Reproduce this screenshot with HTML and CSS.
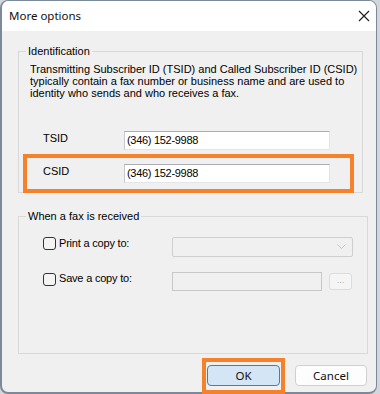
FILE: index.html
```html
<!DOCTYPE html>
<html>
<head>
<meta charset="utf-8">
<link rel="stylesheet" href="styles.css">
</head>
<body>
<div class="window">
  <div class="titlebar">
    <span class="title">More options</span>
    <svg class="close" width="12" height="12" viewBox="0 0 12 12"><path d="M1 1 L11 11 M11 1 L1 11" stroke="#1b1b1b" stroke-width="1.1" fill="none"/></svg>
  </div>
  <div class="content">
    <fieldset class="group group-id">
      <legend>Identification</legend>
      <p class="desc">Transmitting Subscriber ID (TSID) and Called Subscriber ID (CSID) typically contain a fax number or business name and are used to identity who sends and who receives a fax.</p>
      <div class="row row-tsid">
        <label class="lbl">TSID</label>
        <div class="textbox">(346) 152-9988</div>
      </div>
      <div class="row row-csid">
        <label class="lbl">CSID</label>
        <div class="textbox">(346) 152-9988</div>
        <div class="highlight hl-csid"></div>
      </div>
    </fieldset>
    <fieldset class="group group-fax">
      <legend>When a fax is received</legend>
      <div class="crow crow-print">
        <span class="check"></span>
        <span class="clabel">Print a copy to:</span>
        <div class="combo disabled">
          <svg class="chev" width="9" height="6" viewBox="0 0 9 6"><path d="M0.5 0.5 L4.5 4.5 L8.5 0.5" stroke="#c4c4c4" stroke-width="1" fill="none"/></svg>
        </div>
      </div>
      <div class="crow crow-save">
        <span class="check"></span>
        <span class="clabel">Save a copy to:</span>
        <div class="pathbox disabled"></div>
        <div class="browse">...</div>
      </div>
    </fieldset>
    <div class="buttons">
      <div class="ok-wrap">
        <button class="btn btn-ok">OK</button>
        <div class="highlight hl-ok"></div>
      </div>
      <button class="btn btn-cancel">Cancel</button>
    </div>
  </div>
</div>
</body>
</html>
```
FILE: styles.css
```css
html, body {
  margin: 0;
  padding: 0;
}
body {
  background: #d3d6da;
  width: 380px;
  height: 394px;
  overflow: hidden;
  font-family: "Liberation Sans", Arial, sans-serif;
  font-size: 11px;
  color: #000;
}
.window {
  position: relative;
  box-sizing: border-box;
  width: 377px;
  height: 394px;
  background: #f0f0f0;
  border: 1px solid #7b8a99;
  border-left-width: 2px;
  border-bottom-width: 2px;
  border-radius: 8px;
}
.titlebar {
  height: 30px;
  background: #fff;
  border-radius: 7px 7px 0 0;
  display: flex;
  align-items: center;
  justify-content: space-between;
  padding: 0 6px 0 7px;
}
.title {
  font-family: "Noto Sans", "Open Sans", sans-serif;
  font-size: 11.5px;
  color: #111;
  margin-top: -1px;
}
.content {
  padding: 13px 0 0 16px;
}
.group {
  margin: 0;
  border: 1px solid #d9d9d9;
  border-radius: 0;
  box-sizing: border-box;
  padding: 0 0 0 7px;
}
.group legend {
  padding: 0 2px;
  line-height: 14px;
  height: 14px;
}
.group-id {
  width: 345px;
  padding-bottom: 9px;
}
.desc {
  margin: 5px 0 0 4px;
  line-height: 12px;
  width: 330px;
  letter-spacing: 0px;
}
.row {
  display: flex;
  align-items: flex-start;
  margin-left: 17px;
  width: 287px;
}
.row-tsid {
  margin-top: 32px;
}
.row-csid {
  position: relative;
  margin-top: 14px;
}
.lbl {
  width: 81px;
  line-height: 12px;
  margin-top: 1px;
}
.textbox {
  box-sizing: border-box;
  width: 206px;
  height: 19px;
  background: #fff;
  border: 1px solid #e3e5ea;
  border-top-color: #abadb3;
  border-left-color: #c6c8cd;
  padding: 0 0 0 2px;
  line-height: 17px;
  letter-spacing: -0.3px;
}
.highlight {
  position: absolute;
  box-sizing: border-box;
  border: 4px solid #f5822a;
}
.hl-csid {
  left: -20px;
  top: -10px;
  right: -24px;
  bottom: -10px;
}
.group-fax {
  width: 350px;
  margin-top: 16px;
  padding-bottom: 62px;
}
.crow {
  display: flex;
  align-items: flex-start;
  margin-left: 17px;
}
.crow-print {
  margin-top: 14px;
}
.crow-save {
  margin-top: 15px;
}
.check {
  box-sizing: border-box;
  width: 13px;
  height: 13px;
  border: 1px solid #333;
  border-radius: 3px;
  background: #f4f4f4;
  flex: none;
}
.crow-save .check {
  margin-top: 1px;
}
.clabel {
  margin-left: 3px;
  width: 113px;
  line-height: 13px;
  letter-spacing: -0.2px;
}
.combo {
  position: relative;
  box-sizing: border-box;
  width: 181px;
  height: 20px;
  border: 1px solid #cfcfcf;
  border-radius: 2px;
  background: #f0f0f0;
  display: flex;
  align-items: center;
  justify-content: flex-end;
  padding-right: 6px;
}
.pathbox {
  box-sizing: border-box;
  width: 150px;
  height: 19px;
  border: 1px solid #c8c8c8;
  background: #f0f0f0;
}
.browse {
  box-sizing: border-box;
  width: 23px;
  height: 17px;
  margin: 1px 0 0 7px;
  border: 1px solid #dcdcdc;
  border-radius: 3px;
  background: #f5f5f5;
  color: #a8a8a8;
  font-size: 9px;
  line-height: 13px;
  text-align: center;
}
.buttons {
  display: flex;
  justify-content: flex-end;
  gap: 15px;
  margin-top: 11px;
  padding-right: 9px;
}
.ok-wrap {
  position: relative;
  display: flex;
}
.btn {
  box-sizing: border-box;
  height: 21px;
  margin: 0;
  padding: 0;
  font-family: "Noto Sans", "Open Sans", sans-serif;
  font-size: 11.5px;
  color: #111;
  border-radius: 4px;
  line-height: 18px;
}
.btn-ok {
  width: 73px;
  background: #d4e6f6;
  border: 1px solid #4f7aa3;
}
.btn-cancel {
  width: 72px;
  background: #fdfdfd;
  border: 1px solid #d0d0d0;
}
.hl-ok {
  left: -5px;
  right: -5px;
  top: -7px;
  bottom: -8px;
}
```
